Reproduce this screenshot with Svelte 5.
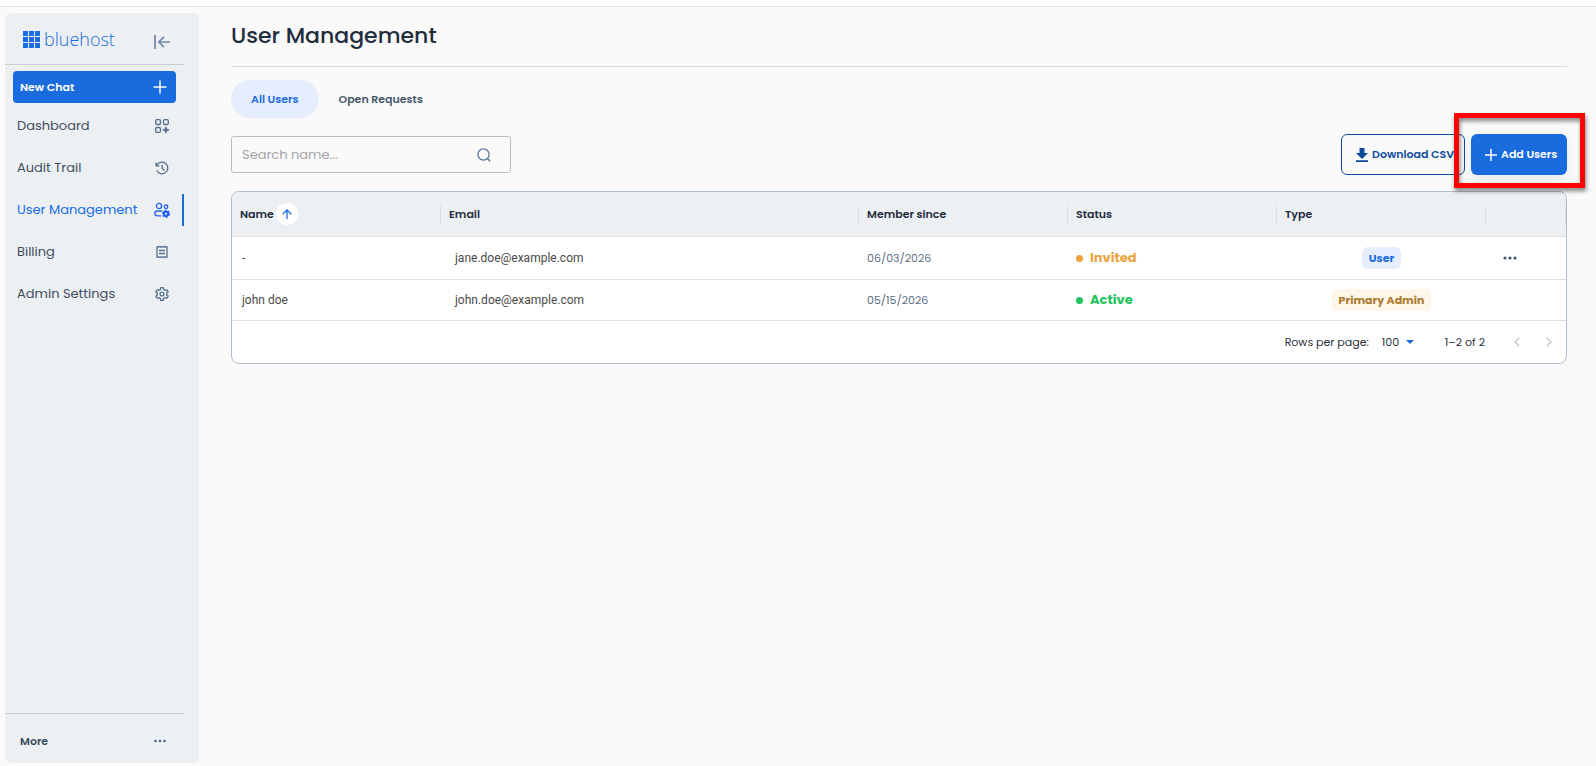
<script>
	let search = '';
	let activeTab = 'All Users';
	let rowsPerPage = 100;

	const tabs = ['All Users', 'Open Requests'];

	const links = [
		{ label: 'Dashboard', icon: 'dashboard' },
		{ label: 'Audit Trail', icon: 'history' },
		{ label: 'User Management', icon: 'users', active: true },
		{ label: 'Billing', icon: 'receipt' },
		{ label: 'Admin Settings', icon: 'gear' }
	];

	const columns = ['Name', 'Email', 'Member since', 'Status', 'Type', ''];

	const users = [
		{
			name: '-',
			email: 'jane.doe@example.com',
			since: '06/03/2026',
			status: 'Invited',
			type: 'User',
			menu: true
		},
		{
			name: 'john doe',
			email: 'john.doe@example.com',
			since: '05/15/2026',
			status: 'Active',
			type: 'Primary Admin',
			menu: false
		}
	];
</script>

<div class="page">
	<div class="topbar"></div>

	<div class="layout">
		<aside class="sidebar">
			<div class="brand">
				<a class="logo" href="#home">
					<svg width="17" height="17" viewBox="0 0 17 17" fill="#196bde">
						{#each [0, 6, 12] as y}
							{#each [0, 6, 12] as x}
								<rect {x} {y} width="5" height="5" />
							{/each}
						{/each}
					</svg>
					<span>bluehost</span>
				</a>
				<button class="icon-button collapse" aria-label="Collapse sidebar">
					<svg width="16" height="14" viewBox="0 0 16 14" fill="none" stroke="#7089a5" stroke-width="1.700">
						<path d="M1 0v14M16 7H5M10 1.800 4.800 7l5.200 5.200" />
					</svg>
				</button>
			</div>

			<button class="new-chat">
				New Chat
				<svg width="14" height="14" viewBox="0 0 14 14" stroke="#fff" stroke-width="1.500">
					<path d="M7 .5v13M.5 7h13" />
				</svg>
			</button>

			<nav>
				{#each links as link}
					<a href="#{link.icon}" class="nav-link" class:active={link.active}>
						{link.label}
						<svg width="16" height="16" viewBox="0 0 16 16" fill="none" stroke="currentColor" stroke-width="1.300">
							{#if link.icon == 'dashboard'}
								<rect x="1.700" y="1.700" width="4.800" height="4.800" rx="1.200" />
								<rect x="9.500" y="1.700" width="4.800" height="4.800" rx="1.200" />
								<rect x="1.700" y="9.500" width="4.800" height="4.800" rx="1.200" />
								<path d="M11.900 8.700l1 2.200 2.300 1-2.300 1-1 2.300-1-2.300-2.300-1 2.300-1z" fill="currentColor" stroke-width=".6" />
							{:else if link.icon == 'history'}
								<path d="M3.600 4.200a5.800 5.800 0 1 1-.8 6.300M8.200 4.800v3.700l2.300 2" />
								<path d="M1.400 2v4.500h4.500z" fill="currentColor" stroke="none" />
							{:else if link.icon == 'users'}
								<circle cx="5" cy="4" r="2.600" />
								<circle cx="12" cy="4.800" r="1.800" />
								<path d="M8.200 9H3.500C1.500 9 .8 10.200.8 11.400S2 13.800 4 13.800h3.300" />
								<circle cx="12" cy="11.800" r="2.200" stroke-width="2.200" />
								<circle cx="12" cy="11.800" r="3.500" stroke-dasharray="1.830" stroke-width="1.200" />
							{:else if link.icon == 'receipt'}
								<path d="M3 2.500v11M13 2.500v11" />
								<path d="M3 2.500l1.200.8 1.300-.8 1.200.8L8 2.500l1.300.8 1.200-.8 1.300.8 1.200-.8M3 13.500l1.200-.8 1.300.8 1.200-.8 1.300.8 1.300-.8 1.200.8 1.300-.8 1.200.8" />
								<path d="M5 6.500h6M5 9.500h6" />
							{:else}
								<path
									d="M6.800 1.700h2.400l.4 1.800 1.500.9 1.800-.6 1.200 2.100-1.400 1.200v1.800l1.400 1.200-1.200 2.100-1.800-.6-1.500.9-.4 1.800H6.800l-.4-1.800-1.500-.9-1.800.6-1.200-2.100 1.400-1.200V7.100L1.900 5.900l1.200-2.100 1.800.6 1.500-.9z"
									stroke-linejoin="round"
								/>
								<circle cx="8" cy="8" r="1.900" />
							{/if}
						</svg>
					</a>
				{/each}
			</nav>

			<button class="more">
				More
				<svg width="12" height="4" viewBox="0 0 12 4" fill="#4b6a88">
					<circle cx="1.500" cy="2" r="1.300" />
					<circle cx="6" cy="2" r="1.300" />
					<circle cx="10.500" cy="2" r="1.300" />
				</svg>
			</button>
		</aside>

		<main>
			<h1>User Management</h1>

			<div class="tabs" role="tablist">
				{#each tabs as tab}
					<button
						class="tab"
						role="tab"
						aria-selected={activeTab == tab}
						class:active={activeTab == tab}
						on:click={() => (activeTab = tab)}
					>
						{tab}
					</button>
				{/each}
			</div>

			<div class="toolbar">
				<label class="search">
					<input type="text" placeholder="Search name..." aria-label="Search name" bind:value={search} />
					<svg width="14" height="14" viewBox="0 0 14 14" fill="none" stroke="#54779b" stroke-width="1.300">
						<circle cx="6.500" cy="6.500" r="5.600" />
						<path d="m10.500 10.500 2.700 2.700" />
					</svg>
				</label>

				<div class="actions">
					<button class="download">
						<svg width="12" height="14" viewBox="0 0 12 14" fill="#0d4a9c">
							<path d="M3.500 0h5v5H12L6 11 0 5h3.500zM0 12.300h12V14H0z" />
						</svg>
						Download CSV
					</button>
					<div class="highlighted">
						<button class="add">
							<svg width="12" height="12" viewBox="0 0 12 12" stroke="#fff" stroke-width="1.500">
								<path d="M6 0v12M0 6h12" />
							</svg>
							Add Users
						</button>
						<div class="highlight"></div>
					</div>
				</div>
			</div>

			<div class="card">
				<table>
					<thead>
						<tr>
							{#each columns as column}
								<th>
									{column}
									{#if column == 'Name'}
										<button class="sort" aria-label="Sort by name">
											<svg width="10" height="10" viewBox="0 0 10 10" fill="none" stroke="#196bde" stroke-width="1.300">
												<path d="M5 10V1M.7 5.200 5 .9l4.300 4.300" />
											</svg>
										</button>
									{/if}
								</th>
							{/each}
						</tr>
					</thead>
					<tbody>
						{#each users as user}
							<tr>
								<td class="name">{user.name}</td>
								<td class="email">{user.email}</td>
								<td class="since">{user.since}</td>
								<td class="status {user.status.toLowerCase()}">{user.status}</td>
								<td class="type">
									<span class="badge" class:admin={user.type != 'User'}>{user.type}</span>
								</td>
								<td class="menu">
									{#if user.menu}
										<button class="icon-button" aria-label="User actions">
											<svg width="14" height="4" viewBox="0 0 14 4" fill="#3b5570">
												<circle cx="2" cy="2" r="1.600" />
												<circle cx="7" cy="2" r="1.600" />
												<circle cx="12" cy="2" r="1.600" />
											</svg>
										</button>
									{/if}
								</td>
							</tr>
						{/each}
					</tbody>
				</table>

				<div class="pagination">
					<label for="rows">Rows per page:</label>
					<div class="select">
						<select id="rows" bind:value={rowsPerPage}>
							<option value={25}>25</option>
							<option value={50}>50</option>
							<option value={100}>100</option>
						</select>
						<svg width="8" height="4" viewBox="0 0 8 4" fill="#196bde"><path d="M0 0h8L4 4z" /></svg>
					</div>
					<span class="range">1–2 of 2</span>
					<button class="icon-button" aria-label="Previous page" disabled>
						<svg width="6" height="10" viewBox="0 0 6 10" fill="none" stroke="#c3cbd4" stroke-width="1.500">
							<path d="M5.300.7 1 5l4.300 4.300" />
						</svg>
					</button>
					<button class="icon-button" aria-label="Next page" disabled>
						<svg width="6" height="10" viewBox="0 0 6 10" fill="none" stroke="#c3cbd4" stroke-width="1.500">
							<path d="M.7.7 5 5 .7 9.300" />
						</svg>
					</button>
				</div>
			</div>
		</main>
	</div>
</div>

<style>
	:global(body) {
		margin: 0;
		background: #fafafa;
	}

	.page {
		display: flex;
		flex-direction: column;
		min-height: 100vh;
		font-family: Poppins, Inter, sans-serif;
		font-size: 11px;
		color: #1f2d3d;
	}

	.page,
	.page * {
		box-sizing: border-box;
	}

	svg {
		display: block;
		flex: none;
	}

	button,
	input,
	select {
		font: inherit;
		color: inherit;
		background: none;
		border: 0;
		margin: 0;
		padding: 0;
	}

	button {
		cursor: pointer;
	}

	a {
		color: inherit;
		text-decoration: none;
	}

	.topbar {
		height: 7px;
		background: #fff;
		border-bottom: 1px solid #dedede;
	}

	.layout {
		flex: 1;
		display: flex;
		gap: 32px;
		padding: 6px 29px 3px 5px;
	}

	/* sidebar */
	.sidebar {
		flex: none;
		display: flex;
		flex-direction: column;
		width: 194px;
		padding-right: 15px;
		background: #ecf0f3;
		border-radius: 6px;
	}

	.brand {
		display: flex;
		align-items: flex-start;
		justify-content: space-between;
		height: 52px;
		padding: 14px 14px 0 18px;
		border-bottom: 1px solid #c9ced3;
	}

	.logo {
		display: flex;
		align-items: center;
		gap: 4px;
		font-family: 'Open Sans', sans-serif;
		font-size: 18px;
		font-weight: 300;
		line-height: 24px;
		color: #196bde;
	}

	.icon-button {
		display: flex;
		align-items: center;
		justify-content: center;
	}

	.collapse {
		height: 30px;
	}

	.new-chat {
		display: flex;
		align-items: center;
		justify-content: space-between;
		height: 32px;
		margin: 6px 8px 7px;
		padding: 0 9px 0 7px;
		border-radius: 4px;
		background: #196bde;
		color: #fff;
		font-weight: 600;
	}

	nav {
		display: flex;
		flex-direction: column;
		gap: 10px;
	}

	.nav-link {
		display: flex;
		align-items: center;
		justify-content: space-between;
		height: 32px;
		padding: 0 12px;
		border-right: 2px solid transparent;
		font-size: 13px;
		color: #3f4e5e;
	}

	.nav-link svg {
		color: #54708c;
	}

	.nav-link.active {
		border-color: #196bde;
		color: #196bde;
	}

	.nav-link.active svg {
		color: #2460f5;
	}

	.more {
		display: flex;
		align-items: center;
		justify-content: space-between;
		height: 50px;
		margin-top: auto;
		padding: 5px 18px 0 15px;
		border-top: 1px solid #c9ced3;
		font-weight: 600;
		color: #3b4a5a;
	}

	/* content */
	main {
		flex: 1;
		min-width: 0;
	}

	h1 {
		margin: 0;
		height: 54px;
		padding-top: 8px;
		border-bottom: 1px solid #d8d8d8;
		font-size: 22px;
		font-weight: 500;
		line-height: 30px;
	}

	.tabs {
		display: flex;
		margin-top: 13px;
	}

	.tab {
		height: 38px;
		padding: 0 20px;
		border-radius: 19px;
		font-weight: 600;
		color: #45586b;
	}

	.tab.active {
		background: #e6eefe;
		color: #196bde;
	}

	.toolbar {
		display: flex;
		align-items: center;
		justify-content: space-between;
		margin-top: 16px;
	}

	.search {
		display: flex;
		align-items: center;
		width: 280px;
		height: 37px;
		padding: 0 19px 0 10px;
		border: 1px solid #bdbdbd;
		border-radius: 3px;
		font-size: 13px;
	}

	.search input {
		flex: 1;
		min-width: 0;
		outline: 0;
	}

	.search input::placeholder {
		color: #a2a5a9;
		opacity: 1;
	}

	.actions {
		display: flex;
		gap: 6px;
	}

	.download,
	.add {
		display: flex;
		align-items: center;
		gap: 4px;
		height: 41px;
		padding-left: 14px;
		border-radius: 6px;
		font-weight: 600;
		white-space: nowrap;
	}

	.download {
		width: 124px;
		border: 1px solid #0d4a9c;
		color: #0d4a9c;
	}

	.add {
		width: 96px;
		background: #196bde;
		color: #fff;
		box-shadow: 0 4px 14px rgba(0, 0, 0, 0.08);
	}

	.highlighted {
		position: relative;
	}

	.highlight {
		position: absolute;
		inset: -21px -18px -13px -17px;
		border: 5px solid #fe0000;
		filter: drop-shadow(1px 3px 2px rgba(0, 0, 0, 0.5));
		pointer-events: none;
	}

	/* users table */
	.card {
		margin-top: 16px;
		border: 1px solid #aebdcc;
		border-radius: 8px;
		background: #fff;
		overflow: hidden;
	}

	table,
	thead,
	tbody {
		display: block;
	}

	tr {
		display: grid;
		grid-template-columns: 1fr 2fr 1fr 1fr 1fr 80px;
		align-items: center;
		min-height: 41px;
		border-bottom: 1px solid #dedfe0;
	}

	thead tr {
		height: 45px;
		background: #ecf0f3;
	}

	th {
		display: flex;
		align-items: center;
		gap: 2px;
		height: 19px;
		padding: 0 8px;
		border-right: 1px solid #dde1e5;
		font-weight: 600;
		text-align: left;
	}

	.sort {
		display: flex;
		align-items: center;
		justify-content: center;
		width: 22px;
		height: 22px;
		border-radius: 50%;
		background: #fff;
	}

	td {
		padding: 0 8px;
	}

	.name,
	.email {
		padding-left: 10px;
		font-family: Roboto, sans-serif;
		font-size: 12px;
		color: #4a4a4a;
	}

	.email {
		padding-left: 14px;
	}

	.since {
		color: #5b6f86;
	}

	.status {
		display: flex;
		align-items: center;
		gap: 7px;
		font-size: 13px;
		font-weight: 700;
	}

	.status::before {
		content: '';
		width: 7px;
		height: 7px;
		border-radius: 50%;
		background: currentColor;
	}

	.status.invited {
		color: #eba43c;
	}

	.status.active {
		color: #21c45d;
	}

	.type {
		display: flex;
		justify-content: center;
	}

	.badge {
		padding: 0 7px;
		border-radius: 6px;
		background: #e6eefe;
		font-weight: 700;
		line-height: 22px;
		color: #196bde;
	}

	.badge.admin {
		background: #fef6e9;
		color: #ab7a30;
	}

	.menu {
		padding-left: 17px;
	}

	.menu .icon-button {
		height: 42px;
	}

	.pagination {
		display: flex;
		align-items: center;
		justify-content: flex-end;
		height: 42px;
		padding-right: 14px;
		color: #27313c;
	}

	.select {
		display: flex;
		align-items: center;
		margin: 0 31px 0 13px;
	}

	select {
		appearance: none;
		width: 24px;
	}

	.range {
		margin-right: 29px;
	}

	.pagination .icon-button + .icon-button {
		margin-left: 26px;
	}
</style>
